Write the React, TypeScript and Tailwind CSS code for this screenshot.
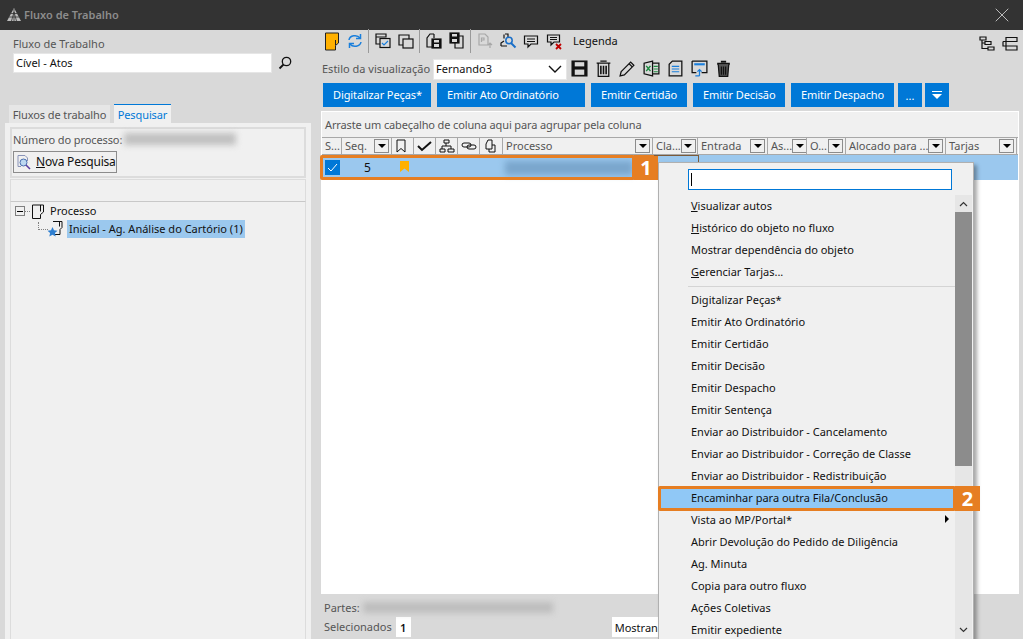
import { ReactNode } from 'react';
import { X } from 'lucide-react';

const actionButtons = [
  { label: 'Digitalizar Peças*', width: 'w-[108px]' },
  { label: 'Emitir Ato Ordinatório', width: 'w-[148px]' },
  { label: 'Emitir Certidão', width: 'w-[96px]' },
  { label: 'Emitir Decisão', width: 'w-[92px]' },
  { label: 'Emitir Despacho', width: 'w-[103px]' },
];

const menuRest = [
  'Digitalizar Peças*',
  'Emitir Ato Ordinatório',
  'Emitir Certidão',
  'Emitir Decisão',
  'Emitir Despacho',
  'Emitir Sentença',
  'Enviar ao Distribuidor - Cancelamento',
  'Enviar ao Distribuidor - Correção de Classe',
  'Enviar ao Distribuidor - Redistribuição',
  'Encaminhar para outra Fila/Conclusão',
  'Vista ao MP/Portal*',
  'Abrir Devolução do Pedido de Diligência',
  'Ag. Minuta',
  'Copia para outro fluxo',
  'Ações Coletivas',
  'Emitir expediente',
];

function Icon({ children, size = 18 }: { children: ReactNode; size?: number }) {
  return (
    <svg width={size} height={size} viewBox="0 0 18 18" fill="none" stroke="#111" strokeWidth="1.2" className="shrink-0">
      {children}
    </svg>
  );
}

// celula de 23px da barra de ferramentas
function Tool({ children }: { children: ReactNode }) {
  return <div className="w-[23px] h-full flex items-center justify-center shrink-0">{children}</div>;
}

function Sep() {
  return <div className="w-[5px] h-[24px] flex justify-center shrink-0"><div className="w-px h-full bg-[#9a9a9a]" /></div>;
}

function FilterBtn() {
  return (
    <div className="w-[15px] h-[14px] border border-[#8c8c8c] bg-[#f0f0f0] flex items-center justify-center shrink-0">
      <div className="w-0 h-0 border-l-[4px] border-r-[4px] border-t-[4px] border-l-transparent border-r-transparent border-t-black" />
    </div>
  );
}

function HeadCell({ width, label, filter, children }: { width: string; label?: string; filter?: boolean; children?: ReactNode }) {
  return (
    <div className={`${width} shrink-0 h-full border-r border-[#a8a8a8] flex items-center justify-between pl-[3px] pr-[2px] overflow-hidden`}>
      {label && <span className="text-[#555] whitespace-nowrap -mt-[2px]">{label}</span>}
      {children}
      {filter && <FilterBtn />}
    </div>
  );
}

function ProcessIcon() {
  return (
    <svg width="14" height="15" viewBox="0 0 14 15" fill="none" stroke="#111" className="shrink-0">
      <path d="M1.500 1h11v7l-3 2.500v4h-8z M9.500 1v6.500" />
    </svg>
  );
}

export default function App() {
  return (
    <div className="relative w-[1023px] h-[639px] overflow-hidden flex flex-col bg-[#d9d9d9] text-[11px] leading-none text-[#111] font-['Noto_Sans','Liberation_Sans',sans-serif]">
      {/* barra de titulo */}
      <div className="h-[30px] bg-[#333333] flex items-center pl-[6px] pr-[9px] shrink-0">
        <svg width="16" height="14" viewBox="0 0 16 14" className="mr-[2px]">
          <path d="M8 0l7 13H1z" fill="#bdbdbd" />
          <path d="M3 9h10M5 5.500h6M8 1v12M5.500 13l2.500-9 2.500 9" stroke="#333" strokeWidth="0.8" fill="none" />
        </svg>
        <span className="text-[#8c8c8c] font-semibold -mt-[2px]">Fluxo de Trabalho</span>
        <X size={24} strokeWidth={1} className="ml-auto text-[#bbbbbb]" />
      </div>

      <div className="flex flex-1 min-h-0">
        {/* painel esquerdo */}
        <div className="w-[320px] shrink-0 flex flex-col">
          <div className="pl-[13px] pt-[8px] text-[#555]">Fluxo de Trabalho</div>
          <div className="flex items-center pl-[13px] mt-[4px]">
            <div className="w-[259px] h-[20px] bg-white border border-[#e6e6e6] flex items-center pl-[2px] pb-[2px]">Cível - Atos</div>
            <svg width="16" height="16" viewBox="0 0 16 16" fill="none" stroke="#111" strokeWidth="1.3" className="ml-[5px]">
              <circle cx="9.500" cy="6.500" r="4.200" />
              <path d="M6.500 9.500l-4 4" strokeWidth="1.800" />
            </svg>
          </div>
          <div className="flex items-end pl-[9px] mt-[31px] h-[19px]">
            <div className="h-[18px] w-[101px] bg-[#e6e6e6] flex items-center justify-center text-[#555] tracking-[-0.1px]">Fluxos de trabalho</div>
            <div className="h-[19px] w-[57px] ml-[4px] bg-[#f0f0f0] border-t border-[#0078d7] flex items-center justify-center text-[#0078d7] tracking-[-0.1px]">Pesquisar</div>
          </div>
          <div className="ml-[5px] mr-[9px] flex-1 bg-[#f0f0f0] pt-[4px] px-[5px] flex flex-col">
            <div className="h-[51px] border-2 border-[#dcdcdc] flex flex-col pl-[1px]">
              <div className="flex items-center h-[20px] text-[#555] tracking-[-0.1px]">
                Número do processo:
                <div className="ml-[2px] w-[112px] h-[12px] bg-[#c0c0c0] blur-[3px]" />
              </div>
              <div className="mt-[2px] w-[104px] h-[22px] border border-[#8c8c8c] flex items-center pl-[3px] gap-[4px] text-[12px] whitespace-nowrap">
                <svg width="15" height="16" viewBox="0 0 15 16" fill="none" className="shrink-0">
                  <path d="M1 1.500h7l2.500 2.500v3M1 1.500v11h3" stroke="#8a94b8" />
                  <circle cx="6.500" cy="8.500" r="3.500" fill="#bcd8f0" stroke="#4a6fb0" />
                  <path d="M9 11l4 4" stroke="#5a3fa0" strokeWidth="1.600" />
                </svg>
                <span className="tracking-[-0.2px]">
                  <span className="underline">N</span>ova Pesquisa
                </span>
              </div>
            </div>
            <div className="h-[23px] mt-[1px] border border-[#dcdcdc] border-b-[#c8c8c8] shrink-0" />
            <div className="flex-1 border-r border-l border-[#dcdcdc]">
              <div className="flex items-center h-[18px] pl-[4px]">
                <div className="w-[10px] h-[10px] border border-[#808080] flex items-center justify-center">
                  <div className="w-[6px] h-px bg-black" />
                </div>
                <div className="w-[5px] border-t border-dotted border-[#808080] mr-[1px]" />
                <ProcessIcon />
                <span className="ml-[5px] pb-[2px]">Processo</span>
              </div>
              <div className="flex items-center h-[18px] pl-[27px]">
                <div className="w-[10px] h-[8px] border-l border-b border-dotted border-[#808080] mb-[6px]" />
                <svg width="16" height="16" viewBox="0 0 16 16" fill="none" className="-ml-[1px] shrink-0">
                  <path d="M6 .500h9v6l-2 2v5H8" stroke="#111" />
                  <path d="M12.500 .500v5" stroke="#111" />
                  <path d="M5.500 6l1.500 3.300 3.500.400-2.600 2.300.800 3.500-3.200-1.800-3.200 1.800.800-3.500L.500 9.700 4 9.300z" fill="#2f7fd0" />
                </svg>
                <span className="ml-[4px] h-[18px] px-[2px] pb-[2px] bg-[#9bc8ee] flex items-center whitespace-nowrap">Inicial - Ag. Análise do Cartório (1)</span>
              </div>
            </div>
          </div>
        </div>

        {/* area direita */}
        <div className="flex-1 min-w-0 flex flex-col">
          {/* toolbar */}
          <div className="h-[24px] mt-[-1px] flex items-center pr-[4px]">
            <Tool>
              <svg width="16" height="19" viewBox="0 0 16 19">
                <path d="M1.500 1h13v10l-3 2.500v4.500h-10z" fill="#ffb000" stroke="#222" />
                <path d="M11.500 13V8" stroke="#222" />
              </svg>
            </Tool>
            <Tool>
              <svg width="18" height="18" viewBox="0 0 18 18" fill="none" stroke="#1a7fdc" strokeWidth="1.500">
                <path d="M3 8a6 5 0 0 1 11-2" />
                <path d="M15 10a6 5 0 0 1-11 2" />
                <path d="M14.500 2v4.500H10M3.500 16v-4.500H8" />
              </svg>
            </Tool>
            <Sep />
            <Tool>
              <Icon>
                <path d="M2 2h10v3H2zM2 5v7h4" />
                <rect x="6" y="6.500" width="10" height="9" fill="#d9d9d9" />
                <path d="M8 11l2 2 4-4" stroke="#1a7fdc" />
              </Icon>
            </Tool>
            <Tool>
              <Icon>
                <path d="M2 3h10v10H2z" />
                <rect x="6" y="7" width="10" height="9" fill="#d9d9d9" />
              </Icon>
            </Tool>
            <Sep />
            <Tool>
              <Icon>
                <path d="M9 2H5L2 6v9h6M9 2v4" />
                <rect x="7" y="7" width="9" height="9" fill="#111" />
                <rect x="9" y="8" width="5" height="2.500" fill="#d9d9d9" stroke="none" />
                <rect x="9" y="12" width="5" height="3" fill="#d9d9d9" stroke="none" />
              </Icon>
            </Tool>
            <Tool>
              <Icon>
                <rect x="2" y="1" width="9" height="10" fill="#111" />
                <rect x="4" y="2" width="5" height="2.500" fill="#d9d9d9" stroke="none" />
                <rect x="4" y="7" width="5" height="3" fill="#d9d9d9" stroke="none" />
                <path d="M11 4h4v12H7v-5" />
              </Icon>
            </Tool>
            <Sep />
            <Tool>
              <Icon>
                <g stroke="#a8a8a8">
                  <path d="M3 2h6l3 3v8H3zM5.500 10V6H8v2H5.500" />
                  <path d="M14 16v-5M12 13l2-2 2 2" />
                </g>
              </Icon>
            </Tool>
            <Tool>
              <Icon>
                <path d="M2 14v-3l3-2M6 2h3v3M2 14h6M5 2.500v4" />
                <circle cx="10" cy="8.500" r="3.200" stroke="#1a6fc8" strokeWidth="1.500" />
                <path d="M12 11l4.500 4.500" stroke="#1a6fc8" strokeWidth="2" />
              </Icon>
            </Tool>
            <Tool>
              <Icon>
                <path d="M2.500 4h13v8H9l-3 3v-3H2.500z" />
                <path d="M5 7h8M5 9.500h8" strokeWidth="1" />
              </Icon>
            </Tool>
            <Tool>
              <Icon>
                <path d="M2.500 3h12v7H9l-3 3v-3H2.500z" />
                <path d="M5 5.500h7M5 7.500h7" strokeWidth="1" />
                <path d="M11 12l5 5M16 12l-5 5" stroke="#c00000" strokeWidth="1.800" />
              </Icon>
            </Tool>
            <span className="ml-[8px] pb-[2px]">Legenda</span>
            <div className="ml-auto mt-[6px] flex items-center gap-[5px]">
              <Icon>
                <path d="M2 2h6v3H2zM7 6.500h6v3H7zM10 12h6v3h-6zM4 5v8.500h6M4 8h3" />
              </Icon>
              <Icon>
                <path d="M5 2.500h11v4H5zM2 6.500h9M5 11h11v4H5zM2 6.500v4.500h3M5 6.500v4.500" />
              </Icon>
            </div>
          </div>

          {/* estilo */}
          <div className="h-[22px] mt-[5px] flex items-center pl-[2px]">
            <span className="w-[111px] text-[#555] whitespace-nowrap pb-[2px]">Estilo da visualização</span>
            <div className="w-[134px] h-[21px] bg-white border border-[#e6e6e6] flex items-center justify-between pl-[2px] pr-[4px]">
              <span className="pb-[2px]">Fernando3</span>
              <svg width="14" height="8" viewBox="0 0 14 8" fill="none" stroke="#111" strokeWidth="1.400">
                <path d="M1 1l6 6 6-6" />
              </svg>
            </div>
            <div className="ml-[3px] mb-[1px] flex items-center gap-[5px]">
              <Icon size={19}>
                <rect x="2" y="2" width="14" height="14" fill="#111" />
                <rect x="4.500" y="3" width="9" height="4" fill="#d9d9d9" stroke="none" />
                <rect x="4.500" y="10" width="9" height="5" fill="#d9d9d9" stroke="none" />
              </Icon>
              <Icon size={19}>
                <path d="M2.500 4h13M6 2h6M4 4v12.500h10V4" />
                <path d="M6.500 6.500v8M9 6.500v8M11.500 6.500v8" strokeWidth="1.500" />
              </Icon>
              <Icon size={19}>
                <path d="M3 12L12 3l3 3-9 9-4 1z" />
                <path d="M10.500 4.500l3 3" />
              </Icon>
              <Icon size={19}>
                <path d="M10 2L2 4v10l8 2z" />
                <path d="M10 4h6v10h-6" />
                <path d="M11 7h4M11 9.500h4M11 12h4" stroke="#1b8a3e" strokeWidth="1" />
                <path d="M4 6.500l4 5M8 6.500l-4 5" stroke="#1b8a3e" strokeWidth="1.400" />
              </Icon>
              <Icon size={19}>
                <path d="M6 2h9v14H3V5z" />
                <path d="M5.500 7h7M5.500 9.500h7M5.500 12h7" stroke="#1a7fdc" strokeWidth="1" />
              </Icon>
              <Icon size={19}>
                <path d="M2 2h14v11h-5M2 2v11h4" />
                <path d="M4 5h10" stroke="#1a7fdc" strokeWidth="2" />
                <path d="M9 16v-6M7 12l2-2 2 2M5 16h4" stroke="#1a7fdc" />
              </Icon>
              <Icon size={19}>
                <path d="M3 4.500h12M6.500 2.500h5" strokeWidth="1.800" />
                <path d="M4 5l1 11.500h8L14 5" fill="#555" />
                <path d="M7 7v8M9 7v8M11 7v8" stroke="#111" />
              </Icon>
            </div>
          </div>

          {/* botoes de acao */}
          <div className="h-[24px] mt-[3px] flex items-center pl-[3px] text-white">
            {actionButtons.map((b) => (
              <div key={b.label} className={`${b.width} h-full bg-[#0078d7] flex items-center pl-[10px] pb-[1px] mr-[6px] whitespace-nowrap tracking-[-0.1px]`}>
                {b.label}
              </div>
            ))}
            <div className="w-[24px] h-full bg-[#0078d7] flex items-center justify-center -ml-[3px] translate-x-px">...</div>
            <div className="w-[24px] h-full bg-[#0078d7] flex flex-col items-center justify-center gap-[2px] ml-[3px] translate-x-px">
              <div className="w-[10px] h-px bg-white" />
              <div className="w-0 h-0 border-l-[5px] border-r-[5px] border-t-[5px] border-l-transparent border-r-transparent border-t-white" />
            </div>
          </div>

          {/* grid */}
          <div className="h-[483px] mt-[4px] ml-[1px] mr-[4px] border border-white bg-white flex flex-col">
            <div className="h-[25px] bg-[#f0f0f0] flex items-center pl-[3px] text-[#555] shrink-0 tracking-[-0.13px]">Arraste um cabeçalho de coluna aqui para agrupar pela coluna</div>
            <div className="h-[18px] bg-[#f0f0f0] border-t border-b border-[#a8a8a8] flex items-center shrink-0">
              <HeadCell width="w-[20px]" label="S..." />
              <HeadCell width="w-[50px]" label="Seq." filter />
              <HeadCell width="w-[22px]">
                <svg width="12" height="14" viewBox="0 0 12 14" fill="none" stroke="#111"><path d="M2 1h8v12L6 9.500 2 13z" /></svg>
              </HeadCell>
              <HeadCell width="w-[22px]">
                <svg width="15" height="12" viewBox="0 0 15 12" fill="none" stroke="#111" strokeWidth="2"><path d="M1 6l4 4 9-8" /></svg>
              </HeadCell>
              <HeadCell width="w-[22px]">
                <svg width="16" height="14" viewBox="0 0 16 14" fill="none" stroke="#111"><path d="M5 1h5v3H5zM1 10h5v3H1zM9 10h6v3H9zM3 10V7h9v3M7 4v3" /></svg>
              </HeadCell>
              <HeadCell width="w-[22px]">
                <svg width="16" height="10" viewBox="0 0 16 10" fill="none" stroke="#111"><rect x="1" y="2" width="9" height="4" rx="2" /><rect x="6" y="4" width="9" height="4" rx="2" /></svg>
              </HeadCell>
              <HeadCell width="w-[23px]">
                <svg width="14" height="14" viewBox="0 0 14 14" fill="none" stroke="#111"><path d="M3 5l2-4h4v9H3zM9 6h3v7H6v-3" /></svg>
              </HeadCell>
              <HeadCell width="w-[150px]" label="Processo" filter />
              <HeadCell width="w-[45px]" label="Cla..." filter />
              <HeadCell width="w-[70px]" label="Entrada" filter />
              <HeadCell width="w-[39px]" label="As..." filter />
              <HeadCell width="w-[39px]" label="O..." filter />
              <HeadCell width="w-[100px]" label="Alocado para ..." filter />
              <HeadCell width="w-[71px]" label="Tarjas" filter />
            </div>
            <div className="h-[25px] bg-[#9bc8ee] flex items-center shrink-0">
              <div className="w-[15px] h-[15px] ml-[3px] bg-[#0078d7] flex items-center justify-center">
                <svg width="11" height="9" viewBox="0 0 11 9" fill="none" stroke="#fff"><path d="M1 5l3 3 6-7" /></svg>
              </div>
              <span className="ml-[24px] text-[12px]">5</span>
              <svg width="9" height="11" viewBox="0 0 9 11" className="ml-[29px] mb-[3px] shrink-0"><path d="M0 0h9v11L4.500 7.500 0 11z" fill="#ffb000" /></svg>
              <div className="ml-[96px] w-[128px] h-[14px] bg-[#7aa6cc] blur-[3px]" />
            </div>
          </div>

          {/* rodape */}
          <div className="pl-[4px] mt-[7px] flex items-center h-[12px] text-[#555]">
            Partes:
            <div className="ml-[3px] w-[190px] h-[11px] bg-[#bdbdbd] blur-[3px]" />
          </div>
          <div className="pl-[4px] mt-[4px] flex items-center h-[20px] text-[#555]">
            <span className="pb-[2px]">Selecionados</span>
            <div className="ml-[4px] w-[15px] h-[20px] bg-white flex items-center justify-center font-semibold text-[#111]">1</div>
            <div className="ml-[201px] w-[60px] h-[20px] bg-white flex items-center pl-[3px] text-[#111] overflow-hidden">Mostrando</div>
          </div>
        </div>
      </div>

      {/* marcacao 1 */}
      <div className="absolute left-[320px] top-[155px] w-[315px] h-[25px] border-[3px] border-[#e67e22] rounded-[2px]" />
      <div className="absolute left-[634px] top-[155px] w-[24px] h-[25px] bg-[#e67e22] text-white font-bold text-[20px] flex items-center justify-center">1</div>
      <div className="absolute left-[654px] top-[155px] w-[45px] h-[10px] border-t border-r border-[#7a5a3a]" />

      {/* menu de contexto */}
      <div className="absolute left-[658px] top-[162px] w-[316px] h-[480px] bg-[#f0f0f0] border border-[#b0b0b0] shadow-[3px_3px_4px_rgba(0,0,0,0.35)] flex flex-col">
        <div className="h-[32px] shrink-0 pl-[29px] pt-[6px]">
          <div className="w-[264px] h-[21px] bg-white border border-[#0078d7] flex items-center pl-[2px]">
            <div className="w-px h-[13px] bg-black" />
          </div>
        </div>
        <div className="flex flex-1 min-h-0">
          <div className="flex-1 flex flex-col min-w-0">
            <div className="h-[22px] shrink-0 flex items-center pl-[32px] pb-[2px]"><span><span className="underline">V</span>isualizar autos</span></div>
            <div className="h-[22px] shrink-0 flex items-center pl-[32px] pb-[2px]"><span><span className="underline">H</span>istórico do objeto no fluxo</span></div>
            <div className="h-[22px] shrink-0 flex items-center pl-[32px] pb-[2px]">Mostrar dependência do objeto</div>
            <div className="h-[22px] shrink-0 flex items-center pl-[32px] pb-[2px]"><span><span className="underline">G</span>erenciar Tarjas...</span></div>
            <div className="h-[6px] shrink-0 flex items-center pl-[29px]">
              <div className="w-full h-px bg-[#d4d4d4]" />
            </div>
            {menuRest.map((t) => {
              const hi = t.startsWith('Encaminhar');
              const sub = t.startsWith('Vista');
              return (
                <div key={t} className={`h-[22px] shrink-0 flex items-center pl-[32px] pr-[6px] pb-[2px] justify-between ${hi ? 'bg-[#90c8f6]' : ''}`}>
                  {t}
                  {sub && <div className="w-0 h-0 border-t-[4px] border-b-[4px] border-l-[4px] border-t-transparent border-b-transparent border-l-black" />}
                </div>
              );
            })}
          </div>
          <div className="w-[17px] shrink-0 bg-[#e6e6e6] flex flex-col items-center mr-[1px]">
            <div className="h-[17px] flex items-center justify-center shrink-0">
              <svg width="9" height="6" viewBox="0 0 9 6" fill="none" stroke="#333" strokeWidth="1.200"><path d="M1 5l3.500-3.500L8 5" /></svg>
            </div>
            <div className="w-full h-[254px] bg-[#8c8c8c] shrink-0" />
            <div className="flex-1" />
            <div className="h-[17px] mb-[3px] flex items-center justify-center shrink-0">
              <svg width="9" height="6" viewBox="0 0 9 6" fill="none" stroke="#333" strokeWidth="1.200"><path d="M1 1l3.500 3.500L8 1" /></svg>
            </div>
          </div>
        </div>
      </div>

      {/* marcacao 2 */}
      <div className="absolute left-[658px] top-[486px] w-[298px] h-[25px] border-[3px] border-[#e67e22] rounded-[2px]" />
      <div className="absolute left-[955px] top-[486px] w-[25px] h-[25px] bg-[#e67e22] text-white font-bold text-[20px] flex items-center justify-center">2</div>
    </div>
  );
}
